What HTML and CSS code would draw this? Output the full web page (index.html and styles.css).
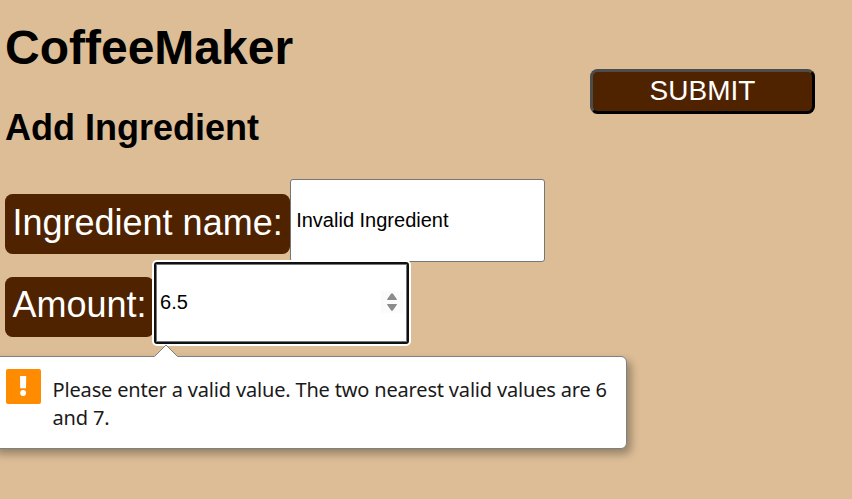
FILE: index.html
```
<!DOCTYPE html>
<html lang="en">
<head>
<meta charset="utf-8">
<title>CoffeeMaker</title>
<link rel="stylesheet" href="styles.css">
</head>
<body>
<main class="page">
  <section class="details">
    <h1>CoffeeMaker</h1>
    <h2>Add Ingredient</h2>
    <div class="row">
      <label for="name">Ingredient name:</label>
      <input id="name" type="text" value="Invalid Ingredient">
    </div>
    <div class="row">
      <label for="amount">Amount:</label>
      <div class="number">
        <input id="amount" class="focused" type="text" value="6.5">
        <svg class="spinner" viewBox="0 0 22 22"><path d="M6.6 9 Q5.6 9 6.3 8 L9.8 3 Q11 1.3 12.2 3 L15.7 8 Q16.4 9 15.4 9Z M6.6 13 Q5.6 13 6.3 14 L9.8 19 Q11 20.7 12.2 19 L15.7 14 Q16.4 13 15.4 13Z"/></svg>
        <div class="bubble">
          <svg class="arrow" viewBox="0 0 24 13"><path class="fill" d="M0 13 L12 1 L24 13Z"/><path class="edge" d="M0.5 12.5 L12 1 L23.5 12.5"/></svg>
          <svg class="warning" viewBox="0 0 35 35"><rect width="35" height="35" rx="2" fill="#ff8c00"/><path d="M14 7h6.2l-.2 12.2h-5.8z" fill="#fff"/><circle cx="17.1" cy="24" r="2.9" fill="#fff"/></svg>
          <p>Please enter a valid value. The two nearest valid values are 6<br>and 7.</p>
        </div>
      </div>
    </div>
  </section>
  <button class="submit" type="submit">SUBMIT</button>
</main>
</body>
</html>
```
FILE: styles.css
```
* { box-sizing: border-box; }
body {
  margin: 0;
  min-height: 499px;
  overflow: hidden;
  background: #dcbd96;
  color: #000;
  font-family: "Liberation Sans", Arial, sans-serif;
}
.page { display: flex; padding-left: 5px; }
.details { width: 585px; padding-top: 20px; }
h1 { margin: 0; font-size: 48px; line-height: 56px; }
h2 { margin: 31px 0 30px; font-size: 36px; line-height: 42px; }
.row { display: flex; height: 82.5px; }
label {
  height: 60px;
  margin-top: 15px;
  padding: 0 7.5px;
  border-radius: 7.5px;
  background: #4f2300;
  color: #fff;
  font-size: 36px;
  line-height: 57px;
  white-space: nowrap;
}
.row + .row label { line-height: 56px; }
input {
  width: 255px;
  height: 83px;
  margin: 0;
  padding: 0 5px;
  border: 1px solid #767676;
  border-radius: 3px;
  background: #fff;
  color: #000;
  font: 20px "Liberation Sans", Arial, sans-serif;
  outline: none;
}
.number { position: relative; }
.focused {
  height: 82px;
  border: 2px solid #101010;
  padding: 0 4px 1px;
  box-shadow: 0 0 0 2px #fff, inset 0 0 0 1px #777;
}
.spinner {
  position: absolute;
  top: 29px;
  left: 227px;
  width: 22px;
  height: 22px;
  background: #fbfbfb;
  fill: #8b8b8b;
}
.bubble {
  position: absolute;
  z-index: 1;
  top: 94.5px;
  left: -163px;
  display: flex;
  width: 636px;
  height: 93px;
  padding: 12px 0 0 14px;
  border: 1px solid #808080;
  border-radius: 6px;
  background: #fff;
  box-shadow: 4px 5px 8px rgba(0, 0, 0, .32);
}
.bubble p {
  margin: 7px 0 0 11.5px;
  color: #1a1a1a;
  font: 20px/28px "Noto Sans", sans-serif;
  letter-spacing: -.175px;
  white-space: nowrap;
}
.arrow {
  position: absolute;
  top: -13px;
  left: 162px;
  width: 24px;
  height: 13px;
}
.arrow .fill { fill: #fff; }
.arrow .edge { fill: none; stroke: #808080; }
.warning { width: 35px; height: 35px; }
.submit {
  width: 225px;
  height: 45px;
  margin-top: 69px;
  padding: 0 0 2px;
  border: 3px solid;
  border-color: #4c4c4c #000 #000 #4c4c4c;
  border-radius: 7.5px;
  background: #4f2300;
  color: #fff;
  font: 28px "Liberation Sans", Arial, sans-serif;
}
```
